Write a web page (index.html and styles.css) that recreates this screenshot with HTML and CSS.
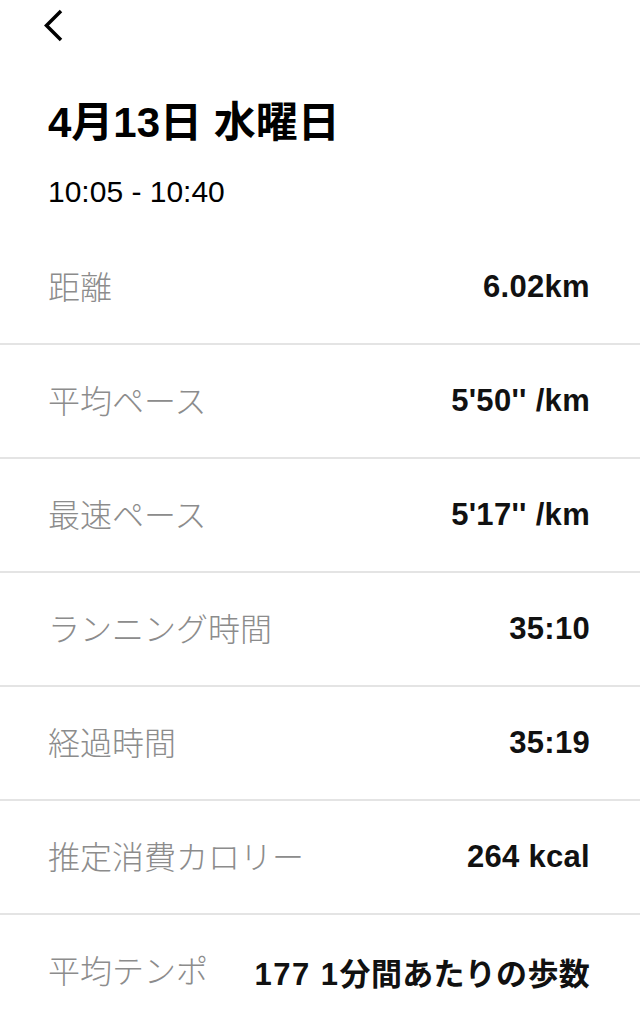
FILE: index.html
```html
<!DOCTYPE html>
<html lang="ja">
<head>
    <meta charset="UTF-8">
    <meta name="viewport" content="width=device-width, initial-scale=1.0">
    <title>ランニング詳細</title>
    <link rel="stylesheet" href="styles.css">
</head>
<body>

    <div class="topbar">
        <svg class="back" width="22" height="34" viewBox="0 0 22 34">
            <polyline points="18,2 3.5,16.5 18,31" fill="none" stroke="#000" stroke-width="3.5" stroke-linejoin="miter"/>
        </svg>
    </div>

    <div class="header">
        <h1>4月13日 水曜日</h1>
        <p class="time">10:05 - 10:40</p>
    </div>

    <div class="stats">
        <div class="row">
            <span class="label">距離</span>
            <span class="value">6.02km</span>
        </div>
        <div class="row">
            <span class="label">平均ペース</span>
            <span class="value">5'50'' /km</span>
        </div>
        <div class="row">
            <span class="label">最速ペース</span>
            <span class="value">5'17'' /km</span>
        </div>
        <div class="row">
            <span class="label">ランニング時間</span>
            <span class="value">35:10</span>
        </div>
        <div class="row">
            <span class="label">経過時間</span>
            <span class="value">35:19</span>
        </div>
        <div class="row">
            <span class="label">推定消費カロリー</span>
            <span class="value">264 kcal</span>
        </div>
        <div class="row">
            <span class="label">平均テンポ</span>
            <span class="value"><span class="num">177 1</span>分間あたりの歩数</span>
        </div>
    </div>

</body>
</html>
```

FILE: styles.css
```css
body {
    font-family: "Liberation Sans", "Noto Sans CJK JP", sans-serif;
    background: #fff;
    color: #000;
    margin: 0;
}
.topbar {
    height: 52px;
    padding: 9px 0 0 43px;
    box-sizing: border-box;
}
.back {
    display: block;
}
.header {
    padding: 46px 48px 21px;
}
.header h1 {
    margin: 0;
    font-size: 42px;
    line-height: 49px;
    font-weight: bold;
}
.header .time {
    margin: 27px 0 0;
    font-size: 30px;
    line-height: 36px;
}
.row {
    display: flex;
    justify-content: space-between;
    align-items: center;
    height: 112px;
    padding: 0 50px 0 48px;
    border-bottom: 2px solid #e4e4e4;
}
.row:last-child {
    border-bottom: none;
}
.label {
    font-family: "Noto Sans CJK JP", sans-serif;
    font-weight: 300;
    font-size: 32px;
    line-height: 32px;
    margin-bottom: 4px;
    color: #8c8c8c;
}
.value {
    font-size: 31px;
    font-weight: bold;
    letter-spacing: 0.3px;
    color: #111;
}
.value .num {
    letter-spacing: 1.5px;
}
```
